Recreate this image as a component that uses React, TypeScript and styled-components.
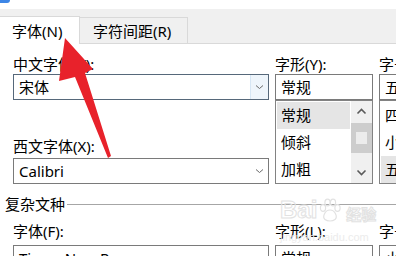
import React from "react";
import styled, { createGlobalStyle } from "styled-components";

const GlobalStyle = createGlobalStyle`
  html, body { margin: 0; padding: 0; background: #fff; }
  body { font-family: "Noto Sans", "Noto Sans CJK SC", sans-serif; }
`;

const Page = styled.div`
  position: relative;
  width: 396px;
  height: 256px;
  overflow: hidden;
  display: flex;
  flex-direction: column;
  background: #fff;
  color: #000;
  font-size: 15px;
`;

const TopStrip = styled.div`
  flex: none;
  height: 9px;
`;

const BlueCorner = styled.div`
  width: 10px;
  height: 3px;
  background: #3d86e6;
  border-bottom-right-radius: 3px;
`;

const TabBar = styled.div`
  flex: none;
  height: 34px;
  background: #f0f0f0;
  border-bottom: 1px solid #d9d9d9;
  display: flex;
  align-items: flex-end;
`;

const Tab = styled.div<{ $active?: boolean; $w: number; $pad: number }>`
  box-sizing: border-box;
  display: flex;
  align-items: center;
  width: ${(p) => p.$w}px;
  height: ${(p) => (p.$active ? 28 : 26)}px;
  margin-bottom: ${(p) => (p.$active ? -1 : 0)}px;
  padding: 2px 0 0 ${(p) => p.$pad}px;
  background: ${(p) => (p.$active ? "#fff" : "#f0f0f0")};
  border-top: 1px solid #d9d9d9;
  border-right: 1px solid #d9d9d9;
  line-height: 19px;
  white-space: nowrap;
  position: relative;
`;

const Body = styled.div`
  flex: 1;
  display: flex;
  flex-direction: column;
  padding: 11px 0 0 13px;
`;

const FieldGrid = styled.div<{ $top?: number }>`
  display: grid;
  grid-template-columns: 256px 98px 70px;
  column-gap: 6px;
  margin-top: ${(p) => p.$top ?? 0}px;
`;

const Column = styled.div`
  display: flex;
  flex-direction: column;
  min-width: 0;
`;

const Label = styled.div<{ $top?: number; $bottom?: number }>`
  height: 19px;
  line-height: 19px;
  white-space: nowrap;
  margin-top: ${(p) => p.$top ?? 0}px;
  margin-bottom: ${(p) => p.$bottom ?? 0}px;
`;

const SelectBox = styled.div<{ $focused?: boolean }>`
  box-sizing: border-box;
  flex: none;
  height: 26px;
  display: flex;
  align-items: stretch;
  border: 1px solid ${(p) => (p.$focused ? "#56687a" : "#7a7a7a")};
  background: #fff;
  overflow: hidden;
`;

const BoxText = styled.div`
  flex: 1;
  display: flex;
  align-items: center;
  padding-left: 5px;
  white-space: nowrap;
  overflow: hidden;
  line-height: 19px;
`;

const DropButton = styled.div<{ $focused?: boolean }>`
  flex: none;
  width: 17px;
  display: flex;
  align-items: center;
  justify-content: center;
  background: ${(p) => (p.$focused ? "#eef5fb" : "transparent")};
  border-left: 1px solid ${(p) => (p.$focused ? "#d6e6f4" : "transparent")};
`;

const ListBox = styled.div`
  box-sizing: border-box;
  flex: none;
  height: 84px;
  display: flex;
  border: 1px solid #828282;
  overflow: hidden;
  background: #fff;
`;

const ListItems = styled.div`
  flex: 1;
  min-width: 0;
  padding: 1px;
  display: flex;
  flex-direction: column;
  overflow: hidden;
`;

const ListItem = styled.div<{ $selected?: boolean }>`
  flex: none;
  height: 27px;
  display: flex;
  align-items: center;
  padding-left: 4px;
  white-space: nowrap;
  line-height: 19px;
  background: ${(p) => (p.$selected ? "#e5e5e5" : "transparent")};
`;

const ScrollBar = styled.div`
  flex: none;
  width: 21px;
  background: #f0f0f0;
  display: flex;
  flex-direction: column;
`;

const ScrollButton = styled.div<{ $h: number }>`
  flex: none;
  height: ${(p) => p.$h}px;
  display: flex;
  align-items: center;
  justify-content: center;
`;

const Thumb = styled.div`
  flex: none;
  height: 30px;
  margin-top: 1px;
  background: #cdcdcd;
  display: flex;
  align-items: center;
  justify-content: center;
`;

const ThumbCore = styled.div`
  width: 11px;
  height: 12px;
  background: #ececec;
`;

const Track = styled.div`
  flex: 1;
`;

const SectionHeader = styled.div`
  display: flex;
  align-items: center;
  gap: 2px;
  height: 19px;
  line-height: 19px;
  margin: 11px 0 0 -8px;
`;

const SectionRule = styled.div`
  flex: 1;
  height: 1px;
  background: #a6a6a6;
`;

const Overlay = styled.svg`
  position: absolute;
  left: 0;
  top: 0;
  pointer-events: none;
`;

const Watermark = styled.div`
  position: absolute;
  left: 280px;
  top: 198px;
  display: flex;
  flex-direction: column;
  align-items: flex-start;
  pointer-events: none;
  color: transparent;
`;

const WatermarkLogo = styled.div`
  display: flex;
  align-items: flex-end;
  gap: 2px;
`;

const WatermarkBai = styled.span`
  font-family: "Liberation Sans", sans-serif;
  font-weight: bold;
  font-size: 24px;
  line-height: 24px;
  -webkit-text-stroke: 1px #e2e2e2;
`;

const WatermarkJy = styled.span`
  font-family: "Noto Sans CJK SC", sans-serif;
  font-size: 15px;
  line-height: 16px;
  font-weight: bold;
  -webkit-text-stroke: 1px #e2e2e2;
  margin-left: 3px;
`;

const WatermarkUrl = styled.span`
  font-family: "Liberation Sans", sans-serif;
  font-size: 11px;
  line-height: 12px;
  margin-top: 9px;
  color: #ececec;
`;

const SmallChevron = () => (
  <svg width="9" height="6" viewBox="0 0 9 6">
    <path d="M1 1.5 L4.5 4.5 L8 1.5" fill="none" stroke="#6a6a6a" strokeWidth="1" />
  </svg>
);

const ScrollChevron = ({ up }: { up?: boolean }) => (
  <svg width="11" height="7" viewBox="0 0 11 7">
    <path
      d={up ? "M1.5 5.5 L5.5 1.5 L9.5 5.5" : "M1.5 1.5 L5.5 5.5 L9.5 1.5"}
      fill="none"
      stroke="#5a5a5a"
      strokeWidth="1.6"
    />
  </svg>
);

const Paw = () => (
  <svg width="22" height="24" viewBox="0 0 22 24">
    <g fill="none" stroke="#e2e2e2" strokeWidth="1.2">
      <ellipse cx="4" cy="10" rx="2.6" ry="3.4" />
      <ellipse cx="8.5" cy="4.5" rx="2.6" ry="3.4" />
      <ellipse cx="14" cy="4.5" rx="2.6" ry="3.4" />
      <ellipse cx="18.5" cy="10" rx="2.6" ry="3.4" />
      <path d="M11 12 C6 12 3 19 6 21.5 C8.5 23.5 13.5 23.5 16 21.5 C19 19 16 12 11 12 Z" />
    </g>
  </svg>
);

export default function App() {
  return (
    <>
      <GlobalStyle />
      <Page>
        <TopStrip>
          <BlueCorner />
        </TopStrip>
        <TabBar>
          <Tab $active $w={80} $pad={12}>
            字体(N)
          </Tab>
          <Tab $w={108} $pad={13}>
            字符间距(R)
          </Tab>
        </TabBar>
        <Body>
          <FieldGrid>
            <Column>
              <Label>中文字体(T):</Label>
              <SelectBox $focused>
                <BoxText>宋体</BoxText>
                <DropButton $focused>
                  <SmallChevron />
                </DropButton>
              </SelectBox>
              <Label $top={37} $bottom={2}>
                西文字体(X):
              </Label>
              <SelectBox>
                <BoxText>Calibri</BoxText>
                <DropButton>
                  <SmallChevron />
                </DropButton>
              </SelectBox>
            </Column>
            <Column>
              <Label>字形(Y):</Label>
              <SelectBox>
                <BoxText>常规</BoxText>
              </SelectBox>
              <ListBox>
                <ListItems>
                  <ListItem $selected>常规</ListItem>
                  <ListItem>倾斜</ListItem>
                  <ListItem>加粗</ListItem>
                </ListItems>
                <ScrollBar>
                  <ScrollButton $h={21}>
                    <ScrollChevron up />
                  </ScrollButton>
                  <Thumb>
                    <ThumbCore />
                  </Thumb>
                  <Track />
                  <ScrollButton $h={22}>
                    <ScrollChevron />
                  </ScrollButton>
                </ScrollBar>
              </ListBox>
            </Column>
            <Column>
              <Label>字号(Z):</Label>
              <SelectBox>
                <BoxText>五号</BoxText>
              </SelectBox>
              <ListBox>
                <ListItems>
                  <ListItem>四号</ListItem>
                  <ListItem>小四</ListItem>
                  <ListItem $selected>五号</ListItem>
                </ListItems>
              </ListBox>
            </Column>
          </FieldGrid>

          <SectionHeader>
            <span>复杂文种</span>
            <SectionRule />
          </SectionHeader>

          <FieldGrid $top={8}>
            <Column>
              <Label $bottom={4}>字体(F):</Label>
              <SelectBox>
                <BoxText>Times New Roman</BoxText>
                <DropButton>
                  <SmallChevron />
                </DropButton>
              </SelectBox>
            </Column>
            <Column>
              <Label $bottom={4}>字形(L):</Label>
              <SelectBox>
                <BoxText>常规</BoxText>
                <DropButton>
                  <SmallChevron />
                </DropButton>
              </SelectBox>
            </Column>
            <Column>
              <Label $bottom={4}>字号(S):</Label>
              <SelectBox>
                <BoxText>小四</BoxText>
              </SelectBox>
            </Column>
          </FieldGrid>
        </Body>

        <Watermark>
          <WatermarkLogo>
            <WatermarkBai>Bai</WatermarkBai>
            <Paw />
            <WatermarkJy>经验</WatermarkJy>
          </WatermarkLogo>
          <WatermarkUrl>jingyan.baidu.com</WatermarkUrl>
        </Watermark>

        <Overlay width="396" height="256" viewBox="0 0 396 256">
          <polygon
            points="65,38 93,69 85,73 111,156 108,158 75,77 59,81"
            fill="#e8222b"
          />
        </Overlay>
      </Page>
    </>
  );
}
